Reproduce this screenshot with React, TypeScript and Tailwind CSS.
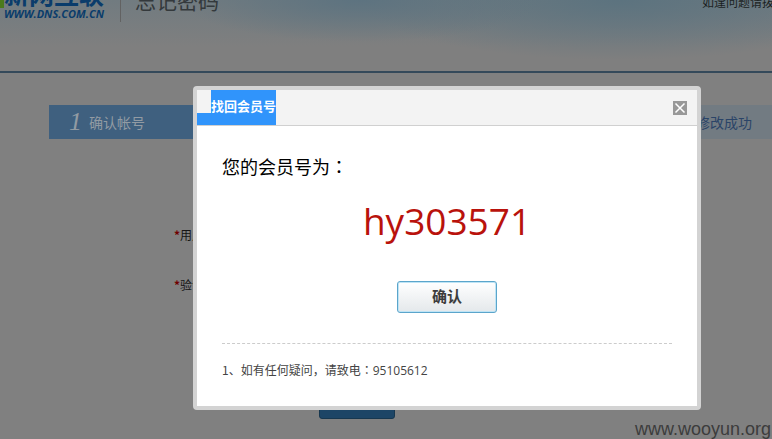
import type { ReactNode } from "react";

const steps = ["确认帐号", "安全验证", "重置密码"];

function Header() {
  return (
    <header className="h-[73px] overflow-hidden border-b-2 border-[#34495a] bg-[radial-gradient(ellipse_180px_42px_at_360px_0px,#5d7380,transparent),radial-gradient(ellipse_260px_60px_at_620px_0px,#5c737f,transparent),linear-gradient(#717b80,#7f7f7f_66%)]">
      <div className="-mt-5 flex items-start">
        <div className="relative w-[120px] shrink-0 pl-1 text-[#0a3c6b]">
          <span className="absolute left-0 top-5 h-2 w-1 bg-[#4b7a1c]" />
          <div className="text-[25px] font-bold leading-[26px] whitespace-nowrap">新网互联</div>
          <div className="font-['Open_Sans','Noto_Sans',sans-serif] text-[11px] font-bold italic leading-4 whitespace-nowrap">
            WWW.DNS.COM.CN
          </div>
        </div>
        <h1 className="h-[42px] border-l border-[#626262] pt-1 pl-[14px] text-[21px] leading-8 text-[#34393c]">忘记密码</h1>
        <p className="ml-auto w-[70px] shrink-0 pt-3 text-xs leading-5 whitespace-nowrap text-[#1b1f22]">
          如逢问题请拨打客服电话
        </p>
      </div>
    </header>
  );
}

function Steps() {
  return (
    <ol className="mt-8 ml-[49px] flex h-[34px] bg-[#727b82] text-sm">
      <li className="flex w-[200px] items-center bg-[#3f607f] pl-5 text-[#929ba3]">
        <span className="w-5 font-['Liberation_Serif',serif] text-[26px] italic leading-8">1</span>
        <span>{steps[0]}</span>
      </li>
      <li className="flex flex-1 items-center justify-center text-[#2a4468]">{steps[1]}</li>
      <li className="flex flex-1 items-center justify-center text-[#2a4468]">{steps[2]}</li>
      <li className="flex items-center pr-5 text-[#2a4468]">修改成功</li>
    </ol>
  );
}

function Field({ id, children }: { id: string; children: ReactNode }) {
  return (
    <div className="flex h-[50px] items-center gap-3">
      <label htmlFor={id} className="text-xs text-[#151515]">
        <span className="font-bold text-[#700000]">*</span>
        {children}
      </label>
      <input id={id} className="h-7 w-[200px] border border-[#626262] bg-[#808080]" />
    </div>
  );
}

function Colon() {
  return (
    <span lang="zh-TW" className="font-['Noto_Sans_CJK_TC',sans-serif]">
      ：
    </span>
  );
}

function Dialog() {
  return (
    <section
      role="dialog"
      aria-labelledby="dialog-title"
      className="fixed left-[193px] top-[86px] w-[508px] rounded border-4 border-[#d3d3d3] bg-white"
    >
      <header className="flex h-9 items-center justify-between border-b border-[#d0d0d0] bg-[#f3f3f3] pr-[10px]">
        <div className="relative h-full bg-[#3094fb] pl-[14px]">
          <span className="absolute left-0 top-0 h-[23px] w-[14px] bg-[#f3f3f3]" />
          <h2 id="dialog-title" className="text-[13px] font-bold leading-8 text-white">
            找回会员号
          </h2>
        </div>
        <button type="button" aria-label="关闭" className="h-[14px] w-[14px] bg-[#989898]">
          <svg viewBox="0 0 14 14" className="h-full w-full" fill="none" stroke="#fff" strokeWidth="1.5">
            <path d="M2.5 2.5 11.5 11.5M11.5 2.5 2.5 11.5" />
          </svg>
        </button>
      </header>
      <div className="px-[25px] pt-7 pb-[25px]">
        <p className="text-lg leading-6 text-black">
          您的会员号为<Colon />
        </p>
        <p className="mt-5 text-center font-['Open_Sans','Noto_Sans',sans-serif] text-[37px] leading-[46px] text-[#b9120c]">
          hy303571
        </p>
        <div className="mt-[37px] flex justify-center">
          <button
            type="button"
            className="h-8 w-[100px] rounded-[3px] border border-[#5ba5cb] bg-linear-to-b from-white to-[#e4e8eb] pb-0.5 text-[15px] font-bold text-[#3d3d3d] shadow-[inset_0_0_0_1px_#bfe4f5]"
          >
            确认
          </button>
        </div>
        <hr className="mt-[30px] border-dashed border-[#cccccc]" />
        <p className="mt-4 text-xs leading-5 text-[#444444]">
          1、如有任何疑问，请致电
          <Colon />
          <span className="font-['Open_Sans','Noto_Sans',sans-serif]">95105612</span>
        </p>
      </div>
    </section>
  );
}

export default function App() {
  return (
    <div className="relative h-screen overflow-hidden bg-[#808080] font-['Noto_Sans_CJK_SC',sans-serif]">
      <Header />
      <Steps />
      <form className="pt-[71px] pl-[174px]">
        <Field id="account">用户名：</Field>
        <Field id="code">验证码：</Field>
        <button
          type="button"
          aria-label="下一步"
          className="mt-[77px] ml-[145px] block h-8 w-[76px] rounded-[3px] border border-[#17374f] bg-[#1d4566]"
        />
      </form>
      <Dialog />
      <p className="absolute right-px bottom-0 font-['Liberation_Sans',sans-serif] text-lg leading-5 text-[#3c3c3c]">
        www.wooyun.org
      </p>
    </div>
  );
}
